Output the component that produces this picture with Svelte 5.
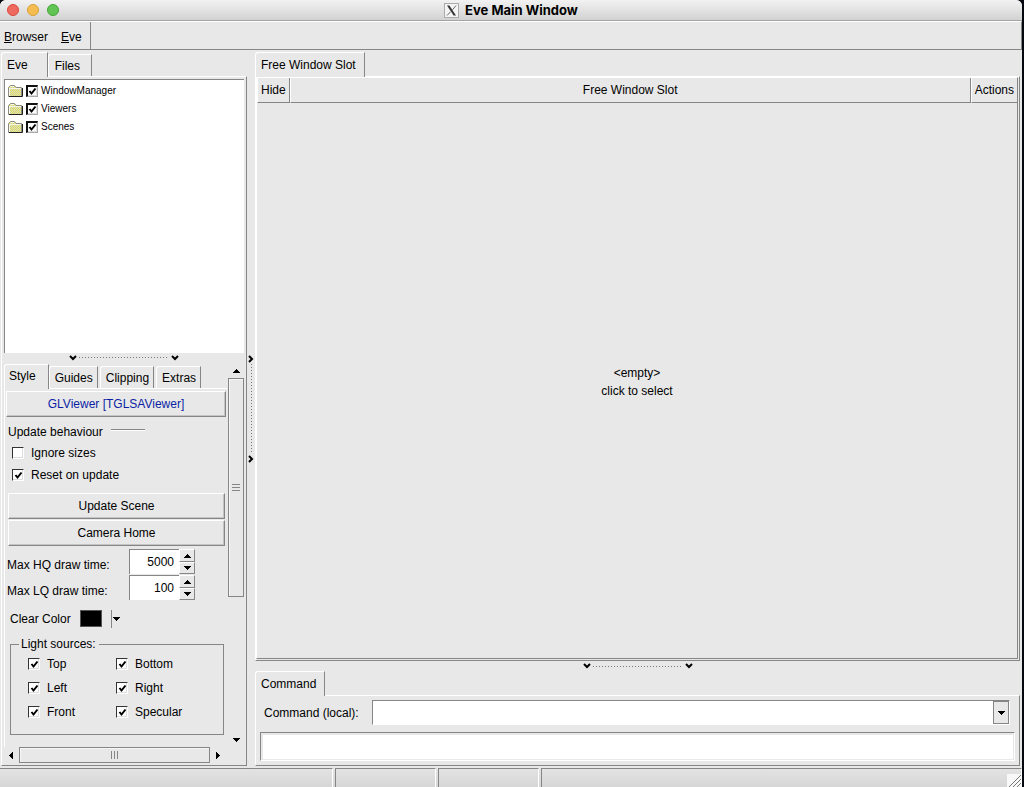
<script lang="ts">
  let tree = $state([
    { name: 'WindowManager', checked: true },
    { name: 'Viewers', checked: true },
    { name: 'Scenes', checked: true }
  ]);
  let lights = $state([
    { name: 'Top', on: true },
    { name: 'Bottom', on: true },
    { name: 'Left', on: true },
    { name: 'Right', on: true },
    { name: 'Front', on: true },
    { name: 'Specular', on: true }
  ]);
  let times = $state([
    { id: 'hq', label: 'Max HQ draw time:', value: 5000 },
    { id: 'lq', label: 'Max LQ draw time:', value: 100 }
  ]);
  let ignoreSizes = $state(false);
  let resetOnUpdate = $state(true);
  let output = $state('');

  const sideTabs = ['Eve', 'Files'];
  const styleTabs = ['Style', 'Guides', 'Clipping', 'Extras'];
  let sideTab = $state('Eve');
  let styleTab = $state('Style');
</script>

{#snippet arrow(dir: string)}
  <svg class="arrow" width="7" height="7" viewBox="0 0 7 7" shape-rendering="crispEdges">
    {#if dir === 'up'}<path d="M3 2h1v1h1v1h1v1h1v1H0V5h1V4h1V3h1z" />
    {:else if dir === 'down'}<path d="M0 2h7v1H6v1H5v1H4v1H3V5H2V4H1V3H0z" />
    {:else if dir === 'left'}<path d="M5 0v7H4V6H3V5H2V4H1V3h1V2h1V1h1V0z" />
    {:else}<path d="M2 0v7h1V6h1V5h1V4h1V3H5V2H4V1H3V0z" />{/if}
  </svg>
{/snippet}

{#snippet splitter(vertical: boolean)}
  <div class="splitter" class:vertical>
    <svg width="8" height="6" viewBox="0 0 8 6"><path d="M1 1l3 3 3-3" /></svg>
    <span class="dots"></span>
    <svg width="8" height="6" viewBox="0 0 8 6"><path d="M1 1l3 3 3-3" /></svg>
  </div>
{/snippet}

<div class="window">
  <header class="titlebar">
    <div class="lights">
      <button class="red" aria-label="Close"></button>
      <button class="amber" aria-label="Minimize"></button>
      <button class="green" aria-label="Zoom"></button>
    </div>
    <h1>
      <svg width="15" height="15" viewBox="0 0 15 15">
        <rect x="0.5" y="0.5" width="14" height="14" fill="#f4f4f4" stroke="#aaa" />
        <path d="M3 2.5h2.4l6.6 10H9.600z" fill="#333" />
        <path d="M12 2.500L8.500 6.800M6.600 8.700L3 12.500" stroke="#666" />
      </svg>
      Eve Main Window
    </h1>
  </header>

  <nav class="menubar">
    <div class="menus">
      <button><u>B</u>rowser</button>
      <button><u>E</u>ve</button>
    </div>
  </nav>

  <main>
    <aside class="side">
      <div class="tabs">
        {#each sideTabs as tab}
          <button class="tab" class:active={tab === sideTab} onclick={() => (sideTab = tab)}>{tab}</button>
        {/each}
      </div>
      <div class="panel side-panel">
        <div class="tree">
          <!-- dithered fill shared by the folder icons -->
          <svg class="defs" width="0" height="0">
            <pattern id="dither" width="2" height="2" patternUnits="userSpaceOnUse">
              <path d="M0 0h2v2H0z" fill="#d6d6c4" />
              <path d="M0 0h1v1H0zM1 1h1v1H1z" fill="#e4e45c" />
            </pattern>
          </svg>
          {#each tree as node}
            <label>
              <svg width="16" height="14" viewBox="0 0 16 14">
                <path d="M.5 12.500v-9l2-2h4l1.500 2h5.500v9z" fill="url(#dither)" stroke="#8a8a80" />
                <path d="M1.500 12v-7.500h11.500M2.500 2.500h3.500" fill="none" stroke="#f6f6ea" />
                <path d="M1 12.500h13.500V4" fill="none" stroke="#222" />
              </svg>
              <input type="checkbox" bind:checked={node.checked} />
              {node.name}
            </label>
          {/each}
        </div>
        {@render splitter(false)}
        <div class="editor">
          <div class="editor-main">
            <div class="tabs style-tabs">
              {#each styleTabs as tab}
                <button class="tab" class:active={tab === styleTab} onclick={() => (styleTab = tab)}>{tab}</button>
              {/each}
            </div>
            <div class="style-body">
              <button class="raised viewer">GLViewer [TGLSAViewer]</button>
              <div class="group-title">Update behaviour<span></span></div>
              <label class="check"><input type="checkbox" bind:checked={ignoreSizes} />Ignore sizes</label>
              <label class="check"><input type="checkbox" bind:checked={resetOnUpdate} />Reset on update</label>
              <div class="actions">
                <button class="raised">Update Scene</button>
                <button class="raised">Camera Home</button>
              </div>
              {#each times as time}
                <div class="time">
                  <label for={time.id}>{time.label}</label>
                  <div class="spin">
                    <input id={time.id} type="text" inputmode="numeric" bind:value={time.value} />
                    <div class="steps">
                      <button aria-label="Increase" onclick={() => time.value++}>{@render arrow('up')}</button>
                      <button aria-label="Decrease" onclick={() => time.value--}>{@render arrow('down')}</button>
                    </div>
                  </div>
                </div>
              {/each}
              <div class="color">
                <span>Clear Color</span>
                <button class="swatch" aria-label="Clear color"></button>
                <button class="pick" aria-label="Choose color">{@render arrow('down')}</button>
              </div>
              <fieldset>
                <legend>Light sources:</legend>
                {#each lights as light}
                  <label><input type="checkbox" bind:checked={light.on} />{light.name}</label>
                {/each}
              </fieldset>
            </div>
          </div>
          <div class="scroll-y">
            <button aria-label="Scroll up">{@render arrow('up')}</button>
            <div class="track"><div class="thumb"><i></i></div></div>
            <button aria-label="Scroll down">{@render arrow('down')}</button>
          </div>
        </div>
        <div class="scroll-x">
          <button aria-label="Scroll left">{@render arrow('left')}</button>
          <div class="thumb"><i></i></div>
          <button aria-label="Scroll right">{@render arrow('right')}</button>
        </div>
      </div>
    </aside>

    {@render splitter(true)}

    <section class="content">
      <div class="tabs">
        <button class="tab active">Free Window Slot</button>
      </div>
      <div class="panel slot">
        <div class="slot-frame">
          <div class="slot-head">
            <button>Hide</button>
            <button class="slot-title">Free Window Slot</button>
            <button>Actions</button>
          </div>
          <button class="empty">&lt;empty&gt;<br />click to select</button>
        </div>
      </div>
      {@render splitter(false)}
      <div class="tabs">
        <button class="tab active">Command</button>
      </div>
      <div class="panel command">
        <div class="command-row">
          <label for="command">Command (local):</label>
          <div class="combo">
            <input id="command" type="text" />
            <button aria-label="Command history">{@render arrow('down')}</button>
          </div>
        </div>
        <input class="output" type="text" aria-label="Command output" bind:value={output} />
      </div>
    </section>
  </main>

  <footer>
    <div class="wide"></div>
    <div></div>
    <div></div>
    <div class="last">
      <svg width="14" height="13" viewBox="0 0 14 13">
        <path d="M0 0h14v13H0z" fill="#f8f8f8" />
        <path d="M2 13L14 1M6 13l8-8M10 13l4-4" stroke="#777" />
      </svg>
    </div>
  </footer>
</div>

<style>
:global(body) {
  margin: 0;
  background: #05080f;
}
.window {
  --bg: #e8e8e8;
  --dark: #868686;
  display: flex;
  flex-direction: column;
  box-sizing: border-box;
  min-height: 100vh;
  margin-right: 2px;
  background: var(--bg);
  border-radius: 6px 6px 0 0;
  font: 12px/16px "Liberation Sans", Arial, sans-serif;
  color: #000;
}
.window * {
  box-sizing: border-box;
}
button, input {
  font: inherit;
  color: inherit;
}
button {
  padding: 0;
  border: 0;
  background: none;
}
.arrow {
  display: block;
}
.titlebar {
  position: relative;
  display: flex;
  align-items: center;
  justify-content: center;
  height: 21px;
  border-bottom: 1px solid #a4a4a4;
  border-radius: 6px 6px 0 0;
  background: linear-gradient(#f2f2f2, #d2d2d2);
}
.titlebar h1 {
  display: flex;
  align-items: center;
  gap: 6px;
  margin: 0;
  font: bold 13px/20px Inter, sans-serif;
}
.lights {
  position: absolute;
  left: 7px;
  display: flex;
  gap: 8px;
}
.lights button {
  width: 12px;
  height: 12px;
  border-radius: 50%;
}
.red {
  background: #ee6a5f;
  border: 1px solid #d9493e;
}
.amber {
  background: #f5bd4f;
  border: 1px solid #d9a03a;
}
.green {
  background: #61c454;
  border: 1px solid #45a535;
}
.menubar {
  display: flex;
  height: 29px;
  border-top: 1px solid #fff;
  border-bottom: 1px solid var(--dark);
  border-right: 1px solid var(--dark);
}
.menus {
  display: flex;
  gap: 13px;
  padding: 2px 8px 0 4px;
  border-right: 1px solid var(--dark);
}
main {
  flex: 1;
  display: flex;
  padding: 2px 2px 2px 1px;
}
.side {
  display: flex;
  flex-direction: column;
  width: 246px;
}
.content {
  flex: 1;
  display: flex;
  flex-direction: column;
  min-width: 0;
}
.tabs {
  display: flex;
  align-items: flex-end;
  height: 24px;
}
.tab {
  height: 22px;
  padding: 0 11px 0 6px;
  border-top: 1px solid #fff;
  border-left: 1px solid #fff;
  border-right: 1px solid var(--dark);
  border-radius: 3px 0 0 0;
  background: var(--bg);
}
.tab.active {
  position: relative;
  height: 25px;
  margin-bottom: -1px;
  padding: 0 8px 0 5px;
}
.side > .tabs .active {
  padding-right: 19px;
}
.style-tabs .tab.active {
  padding: 0 12px 3px 4px;
}
.style-tabs .tab:not(.active) {
  padding: 0 4px 0 5px;
  margin-right: 2px;
}
.panel {
  border: 1px solid #fff;
  border-right: 1px solid var(--dark);
  border-bottom: 1px solid var(--dark);
}
.side-panel {
  flex: 1;
  display: flex;
  flex-direction: column;
  padding: 2px 2px 2px 2px;
}
.tree {
  flex: 1;
  padding: 2px 0 0 3px;
  border-top: 1px solid var(--dark);
  border-left: 1px solid var(--dark);
  background: #fff;
}
.defs {
  display: block;
}
.tree label {
  display: flex;
  align-items: center;
  width: max-content;
  height: 18px;
  font-size: 10px;
}
.tree input {
  margin: 0 3px 0 2px;
}
input[type="checkbox"] {
  appearance: none;
  width: 12px;
  height: 12px;
  border: 1px solid #fff;
  border-top: 1px solid #333;
  border-left: 1px solid #333;
  background: #fff;
  box-shadow: inset -1px -1px #ddd;
}
.tree input[type="checkbox"] {
  border: 1px solid #aaa;
  border-top: 2px solid #111;
  border-left: 2px solid #111;
}
input[type="checkbox"]:checked {
  background: #fff url("data:image/svg+xml,%3Csvg xmlns='http://www.w3.org/2000/svg' viewBox='0 0 9 9'%3E%3Cpath d='M1.500 4l2 2.500 4-5' fill='none' stroke='black' stroke-width='2'/%3E%3C/svg%3E") center / 9px 9px no-repeat;
}
.splitter {
  display: flex;
  align-items: center;
  justify-content: center;
  gap: 2px;
  height: 9px;
}
.splitter svg {
  flex: none;
  fill: none;
  stroke: #000;
  stroke-width: 2;
}
.dots {
  width: 90px;
  height: 1px;
  background: repeating-linear-gradient(90deg, #777 0 1px, transparent 1px 3px);
}
.splitter.vertical {
  flex-direction: column;
  width: 8px;
  height: auto;
}
.vertical svg {
  transform: rotate(-90deg);
}
.vertical .dots {
  width: 1px;
  height: 90px;
  background: repeating-linear-gradient(#777 0 1px, transparent 1px 3px);
}
.content .splitter {
  height: 10px;
}
.editor {
  display: flex;
  justify-content: space-between;
}
.editor-main {
  width: 223px;
}
.style-tabs {
  height: 26px;
}
.style-body {
  padding: 2px 0 12px 1px;
  border-top: 1px solid #fff;
  border-left: 1px solid #fff;
}
.raised {
  display: block;
  width: 217px;
  height: 26px;
  border: 1px solid #fff;
  border-right: 1px solid var(--dark);
  border-bottom: 1px solid var(--dark);
  box-shadow: inset -1px -1px #c4c4c4;
}
.viewer {
  width: 220px;
  color: #0b1fa4;
}
.group-title {
  display: flex;
  align-items: center;
  gap: 8px;
  height: 25px;
  padding: 4px 0 0 2px;
}
.group-title span {
  width: 34px;
  height: 2px;
  margin-bottom: 3px;
  border-top: 1px solid var(--dark);
  border-bottom: 1px solid #fff;
}
.check {
  display: flex;
  align-items: center;
  gap: 7px;
  height: 22px;
  padding-left: 6px;
}
.check input {
  margin: 0;
}
.actions {
  display: flex;
  flex-direction: column;
  gap: 1px;
  padding: 7px 0 3px 2px;
}
.time {
  display: flex;
  height: 26px;
}
.time label {
  width: 123px;
  padding: 8px 0 0 1px;
}
.spin {
  display: flex;
  width: 66px;
  height: 25px;
}
.spin input {
  width: 50px;
  padding: 0 5px 0 0;
  border: 0;
  border-top: 1px solid var(--dark);
  border-left: 1px solid var(--dark);
  background: #fff;
  text-align: right;
}
.steps {
  display: flex;
  flex: 1;
  flex-direction: column;
}
.steps button {
  display: flex;
  flex: 1;
  align-items: center;
  justify-content: center;
  border: 1px solid #fff;
  border-right-color: var(--dark);
  border-bottom-color: var(--dark);
}
.color {
  display: flex;
  align-items: center;
  gap: 9px;
  height: 35px;
  padding-left: 4px;
}
.swatch {
  width: 22px;
  height: 17px;
  border: 1px solid #555;
  background: #000;
}
.pick {
  height: 18px;
  padding-left: 1px;
  border-left: 1px solid var(--dark);
}
fieldset {
  display: grid;
  grid-template-columns: 88px 1fr;
  width: 214px;
  height: 99px;
  margin: 0 0 0 4px;
  padding: 0 0 10px 17px;
  border: 1px solid var(--dark);
}
legend {
  margin-left: -9px;
  padding: 0 3px 0 2px;
}
fieldset label {
  display: flex;
  align-items: center;
  gap: 7px;
  height: 24px;
}
fieldset input {
  margin: 0;
}
.scroll-y {
  display: flex;
  flex-direction: column;
  width: 16px;
}
.scroll-y button, .scroll-x button {
  display: flex;
  align-items: center;
  justify-content: center;
  width: 16px;
  height: 16px;
}
.track {
  flex: 1;
}
.thumb {
  display: flex;
  align-items: center;
  justify-content: center;
  border: 1px solid var(--dark);
  box-shadow: inset 1px 1px #f6f6f6;
}
.track .thumb {
  height: 62%;
}
.thumb i {
  width: 8px;
  height: 7px;
  background: repeating-linear-gradient(var(--dark) 0 1px, transparent 1px 3px);
}
.scroll-x {
  display: flex;
  width: 221px;
}
.scroll-x button {
  width: 15px;
}
.scroll-x .thumb {
  flex: 1;
}
.scroll-x .thumb i {
  width: 7px;
  height: 8px;
  background: repeating-linear-gradient(90deg, var(--dark) 0 1px, transparent 1px 3px);
}
.slot {
  flex: 1;
  display: flex;
  padding: 0 1px 1px 0;
}
.slot-frame {
  flex: 1;
  display: flex;
  flex-direction: column;
  border-left: 1px solid #fff;
  border-top: 1px solid #fff;
  border-right: 1px solid var(--dark);
  border-bottom: 1px solid var(--dark);
}
.slot-head {
  display: flex;
}
.slot-head button {
  height: 25px;
  padding: 0 3px;
  border-left: 1px solid #fff;
  border-right: 1px solid var(--dark);
  border-bottom: 1px solid var(--dark);
}
.slot-head .slot-title {
  flex: 1;
}
.slot-head button:last-child {
  border-right: 0;
}
.empty {
  flex: 1;
  padding-top: 2px;
  line-height: 18px;
}
.command {
  padding: 4px 4px 4px;
}
.command-row {
  display: flex;
  align-items: center;
  margin: 0 5px 7px 4px;
}
.combo {
  flex: 1;
  display: flex;
  height: 25px;
  margin-left: 13px;
  border: 1px solid #fff;
  border-top-color: var(--dark);
  border-left-color: var(--dark);
  background: #fff;
}
.combo input {
  flex: 1;
  min-width: 0;
  border: 0;
  background: none;
}
.combo button {
  display: flex;
  align-items: center;
  justify-content: center;
  width: 16px;
  border: 1px solid var(--dark);
  background: var(--bg);
}
.output {
  display: block;
  width: 100%;
  height: 29px;
  border: 1px solid #fff;
  border-top-color: var(--dark);
  border-left-color: var(--dark);
  background: #fff;
  box-shadow: inset 2px 2px var(--bg), inset -1px -1px var(--bg);
}
footer {
  display: flex;
  gap: 2px;
  height: 19px;
  background: linear-gradient(#e4e4e4, #d6d6d6);
}
footer div {
  flex: 100;
  border-top: 1px solid var(--dark);
  border-left: 1px solid var(--dark);
  border-right: 1px solid #fff;
}
footer .wide {
  flex: 336;
  border-left: 0;
}
footer .last {
  display: flex;
  align-items: flex-end;
  justify-content: flex-end;
  flex: 484;
}
</style>
